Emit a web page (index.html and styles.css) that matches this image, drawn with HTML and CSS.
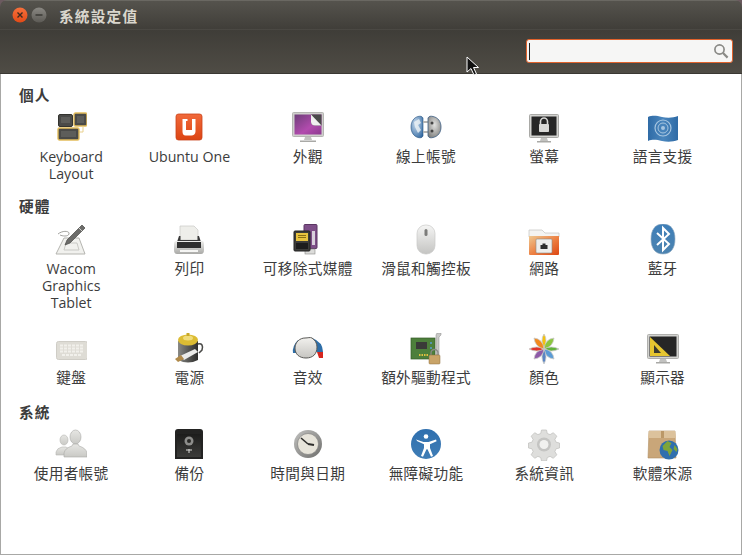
FILE: index.html
```html
<!DOCTYPE html>
<html lang="zh-TW">
<head>
    <meta charset="UTF-8">
    <title>系統設定值</title>
    <link rel="stylesheet" href="styles.css">
</head>
<body>
    <div class="window">
        <!-- Title bar -->
        <div class="title-bar">
            <div class="win-btns">
                <svg class="win-btn" viewBox="0 0 16 16">
                    <defs><linearGradient id="closeGrad" x1="0" y1="0" x2="0" y2="1"><stop offset="0" stop-color="#f6703c"/><stop offset="1" stop-color="#e24a17"/></linearGradient></defs>
                    <circle cx="8" cy="8" r="7.5" fill="url(#closeGrad)"/>
                    <path d="M5.5 5.5l5 5M10.5 5.5l-5 5" stroke="#3c2a20" stroke-width="1.4"/>
                </svg>
                <svg class="win-btn" viewBox="0 0 16 16">
                    <defs><linearGradient id="minGrad" x1="0" y1="0" x2="0" y2="1"><stop offset="0" stop-color="#8a8883"/><stop offset="1" stop-color="#5c5a55"/></linearGradient></defs>
                    <circle cx="8" cy="8" r="7.5" fill="url(#minGrad)"/>
                    <path d="M4.5 8h7" stroke="#3a3935" stroke-width="1.4"/>
                </svg>
            </div>
            <span class="title-text">系統設定值</span>
        </div>

        <!-- Toolbar -->
        <div class="tool-bar">
            <div class="search-box">
                <span class="caret"></span>
                <svg class="search-icon" viewBox="0 0 16 16">
                    <circle cx="6.5" cy="6.5" r="4.6" fill="none" stroke="#8a8a86" stroke-width="1.7"/>
                    <path d="M10 10l4.6 4.6" stroke="#8a8a86" stroke-width="2.2"/>
                </svg>
            </div>
        </div>

        <!-- Main content -->
        <div class="content">
            <h2 class="group-title">個人</h2>
            <div class="icon-grid grid-personal">
                <div class="item">
                    <svg class="icon" viewBox="-2 0 32 32">
                        <rect x="1.5" y="2.5" width="14" height="12" rx="1.5" fill="#4a4a48" stroke="#33332f"/>
                        <rect x="17" y="1" width="13" height="13" rx="1.5" fill="#4a4a48" stroke="#e3bd5c" stroke-width="1.4"/>
                        <path d="M26 14v6h-4" fill="none" stroke="#e8cf8c"/>
                        <rect x="1" y="16" width="21" height="12" rx="1.5" fill="#4a4a48" stroke="#e3bd5c" stroke-width="1.4"/>
                        <rect x="4" y="5" width="9" height="6" fill="#5d5d5a"/>
                        <rect x="20" y="4" width="7" height="7" fill="#5d5d5a"/>
                        <rect x="4" y="19" width="15" height="6" fill="#5d5d5a"/>
                    </svg>
                    <span class="label en">Keyboard Layout</span>
                </div>
                <div class="item">
                    <svg class="icon" viewBox="0 0 32 32">
                        <defs><linearGradient id="oneGrad" x1="0" y1="0" x2="0" y2="1"><stop offset="0" stop-color="#f1693a"/><stop offset="1" stop-color="#dc4513"/></linearGradient></defs>
                        <rect x="3" y="2" width="26" height="26" rx="2.5" fill="url(#oneGrad)" stroke="#c9431a" stroke-width=".8"/>
                        <path d="M9.5 7h5v2h-1.5v9h6v-11h3.5v12.500c0 2.500-2 4-4 4h-6c-2 0-3-1.500-3-4z" fill="#fff"/>
                    </svg>
                    <span class="label en">Ubuntu One</span>
                </div>
                <div class="item">
                    <svg class="icon" viewBox="0 0 32 32">
                        <defs><linearGradient id="purpleGrad" x1="0" y1="0" x2="1" y2="1"><stop offset="0" stop-color="#6d3d79"/><stop offset=".6" stop-color="#b24bae"/><stop offset="1" stop-color="#8c3a90"/></linearGradient></defs>
                        <rect x="0.5" y="0.5" width="31" height="24" rx="1" fill="#cfcfcc" stroke="#b5b5b2"/>
                        <rect x="2.5" y="2.5" width="27" height="20" fill="url(#purpleGrad)"/>
                        <path d="M19 2.5h10.5v11h-6.5q-4 0-4-4z" fill="#4b4b4b"/>
                        <path d="M19 2.5l10.500 11h-6.500q-4 0-4-4z" fill="#f0eff0"/>
                        <path d="M13 25h6l1 3h-8z" fill="#c2c2c0"/>
                        <path d="M8 28.5h16v1.5h-16z" fill="#a9a9a6"/>
                    </svg>
                    <span class="label">外觀</span>
                </div>
                <div class="item">
                    <svg class="icon" viewBox="0 0 32 32">
                        <defs><radialGradient id="globeGrad" cx=".4" cy=".35" r=".8"><stop offset="0" stop-color="#c9dcee"/><stop offset="1" stop-color="#2d659f"/></radialGradient><radialGradient id="plugGrad" cx=".5" cy=".4" r=".8"><stop offset="0" stop-color="#e2e2e0"/><stop offset="1" stop-color="#6a6a68"/></radialGradient></defs>
                        <path d="M13 6c-1-2-3-2-5-1.500-4 1-7 5-7 10.500s3 9.500 7 10.500c2 .5 4 .5 5-1.500z" fill="url(#globeGrad)" stroke="#24507f" stroke-width=".6"/>
                        <path d="M4 10l5-3 2 4-3 2 3 5-3 3-3-6z" fill="#e8eef3" opacity=".85"/>
                        <path d="M13 10h5M13 20h5" stroke="#b5b5b3" stroke-width="2"/>
                        <path d="M18 6c1-2 3-2 5-1.500 5 1 8 5 8 10.500s-3 9.500-8 10.500c-2 .5-4 .5-5-1.500z" fill="url(#plugGrad)" stroke="#3d5f85" stroke-width=".8"/>
                        <circle cx="22" cy="11" r="1.5" fill="#444"/>
                        <circle cx="22" cy="19" r="1.5" fill="#444"/>
                    </svg>
                    <span class="label">線上帳號</span>
                </div>
                <div class="item">
                    <svg class="icon" viewBox="0 -1 32 32">
                        <rect x="1.5" y="1.5" width="29" height="23" rx="1" fill="#d3d3d0" stroke="#a9a9a6"/>
                        <rect x="3.5" y="3.5" width="25" height="19" fill="#262626"/>
                        <path d="M12.5 11v-2.500a3.500 3.500 0 0 1 7 0v2.500" fill="none" stroke="#d8d8d6" stroke-width="1.6"/>
                        <rect x="11" y="11" width="10" height="8" rx=".8" fill="#d8d8d6"/>
                        <path d="M13 25h6l1 3h-8z" fill="#c2c2c0"/>
                        <path d="M9 28h14v1.500h-14z" fill="#a9a9a6"/>
                    </svg>
                    <span class="label">螢幕</span>
                </div>
                <div class="item">
                    <svg class="icon" viewBox="0 0 32 32">
                        <defs><linearGradient id="flagGrad" x1="0" y1="0" x2="1" y2="0"><stop offset="0" stop-color="#2f6ba6"/><stop offset=".5" stop-color="#4a86bd"/><stop offset="1" stop-color="#2f6ba6"/></linearGradient></defs>
                        <path d="M1 5c5-2 9-1 14 0s11 1 16-1v24c-5 2-11 2-16 1s-9-2-14 0z" fill="url(#flagGrad)"/>
                        <circle cx="16" cy="16" r="8" fill="none" stroke="#a6c5e0" stroke-width="1.2"/>
                        <circle cx="16" cy="16" r="5" fill="none" stroke="#a6c5e0"/>
                        <circle cx="16" cy="16" r="2" fill="#a6c5e0"/>
                    </svg>
                    <span class="label">語言支援</span>
                </div>
            </div>

            <h2 class="group-title">硬體</h2>
            <div class="icon-grid grid-hardware">
                <div class="item">
                    <svg class="icon" viewBox="0 0 32 32">
                        <path d="M9 14h15l6 16h-29z" fill="#f1f1ee" stroke="#b5b5b0"/>
                        <path d="M11 19h11l2 7h-15z" fill="none" stroke="#c9c9c5"/>
                        <path d="M3 10c5-4 12-3 11 0s-7 2-9 1" fill="none" stroke="#8c8c88" stroke-width=".8"/>
                        <path d="M27 1l3 3-15 15-5 2 2-5z" fill="#6c6c6a" stroke="#4a4a48" stroke-width=".7"/>
                        <path d="M24 4l3 3" stroke="#cfcfcc"/>
                    </svg>
                    <span class="label en">Wacom Graphics Tablet</span>
                </div>
                <div class="item">
                    <svg class="icon" viewBox="0 0 32 32">
                        <defs><linearGradient id="printGrad" x1="0" y1="0" x2="0" y2="1"><stop offset="0" stop-color="#eeeeec"/><stop offset="1" stop-color="#a9a9a6"/></linearGradient></defs>
                        <path d="M7 2h14l4 4v10h-18z" fill="#eeeeea" stroke="#c9c9c5" stroke-width=".7"/>
                        <path d="M6 12h1.500v4h17v-4h1.500l2 6h-24z" fill="#3a3a3a"/>
                        <path d="M3 17h26q2 0 2 3v6q0 4-3 4h-24q-3 0-3-4v-6q0-3 2-3z" fill="url(#printGrad)"/>
                        <rect x="4" y="18" width="24" height="6" fill="#2e2e2e"/>
                        <rect x="7" y="26" width="18" height="2" fill="#f5f5f3"/>
                    </svg>
                    <span class="label">列印</span>
                </div>
                <div class="item">
                    <svg class="icon" viewBox="-1 0 32 32">
                        <rect x="11" y="0.5" width="13" height="24" rx="1" fill="#7e4f88" stroke="#5b3663"/>
                        <rect x="19" y="7" width="3" height="14" fill="#d9d0dc"/>
                        <rect x="12" y="25" width="10" height="5" fill="#dcdcda" stroke="#8a8a88" stroke-width=".6"/>
                        <rect x="1" y="7" width="16" height="20" rx="1" fill="#3c3c3a" stroke="#232323"/>
                        <rect x="3" y="9" width="12" height="8" fill="#e8c33f"/>
                        <path d="M5 11.500h8M5 13.500h8" stroke="#8a6f14"/>
                        <rect x="3" y="19" width="12" height="6" fill="#1d1d1d"/>
                    </svg>
                    <span class="label">可移除式媒體</span>
                </div>
                <div class="item">
                    <svg class="icon" viewBox="0 0 32 32">
                        <defs><linearGradient id="mouseGrad" x1="0" y1="0" x2="0" y2="1"><stop offset="0" stop-color="#f5f5f4"/><stop offset="1" stop-color="#c4c4c2"/></linearGradient></defs>
                        <rect x="7" y="1" width="18" height="29" rx="8.5" fill="url(#mouseGrad)" stroke="#c9c9c7" stroke-width=".7"/>
                        <rect x="14.5" y="5" width="3" height="7" rx="1.5" fill="#7c7c7a"/>
                    </svg>
                    <span class="label">滑鼠和觸控板</span>
                </div>
                <div class="item">
                    <svg class="icon" viewBox="0 -3 32 32">
                        <defs><linearGradient id="folderGrad" x1="0" y1="0" x2="1" y2="1"><stop offset="0" stop-color="#eec891"/><stop offset=".55" stop-color="#ec7d3f"/><stop offset="1" stop-color="#dd4814"/></linearGradient></defs>
                        <path d="M1 8v-5h13l3 3h14v4h-30z" fill="#f4f4f2" stroke="#c9c9c7" stroke-width=".8"/>
                        <path d="M1 9h30v18q0 1-1 1h-28q-1 0-1-1z" fill="url(#folderGrad)"/>
                        <rect x="8" y="12" width="16" height="14" rx="1" fill="#eeeeec" stroke="#8a8a88" stroke-width=".6"/>
                        <path d="M12.5 22v-4h2v-1.500h3v1.500h2v4z" fill="#2e2e2e"/>
                    </svg>
                    <span class="label">網路</span>
                </div>
                <div class="item">
                    <svg class="icon" viewBox="0 0 32 32">
                        <defs><linearGradient id="btGrad" x1="0" y1="0" x2="0" y2="1"><stop offset="0" stop-color="#3f7fb8"/><stop offset="1" stop-color="#4c83b0"/></linearGradient></defs>
                        <path d="M16 0c8 0 12 6 12 15s-4 15-12 15-12-6-12-15 4-15 12-15z" fill="url(#btGrad)" stroke="#8fa9c0" stroke-width=".6"/>
                        <path d="M10 9l12 11-6 6v-22l6 6-12 11" fill="none" stroke="#fff" stroke-width="2"/>
                    </svg>
                    <span class="label">藍牙</span>
                </div>
                <div class="item">
                    <svg class="icon" viewBox="-1 0 32 32">
                        <rect x="0.5" y="8.5" width="31" height="18" rx="2" fill="#dedcd5" stroke="#cfcdc6"/>
                        <path d="M4 12.500h24M4 15.500h24M4 18.500h24M6 22h20" stroke="#f1f0eb" stroke-width="2" stroke-dasharray="3 1"/>
                    </svg>
                    <span class="label">鍵盤</span>
                </div>
                <div class="item">
                    <svg class="icon" viewBox="0 0 32 32">
                        <defs><linearGradient id="battGrad" x1="0" y1="0" x2="1" y2="0"><stop offset="0" stop-color="#8a8a86"/><stop offset=".5" stop-color="#5a5a57"/><stop offset="1" stop-color="#2e2e2c"/></linearGradient></defs>
                        <path d="M5 8h20v19q-10 5-20 0z" fill="url(#battGrad)"/>
                        <ellipse cx="15" cy="7" rx="10" ry="5.5" fill="#dcbc33"/>
                        <ellipse cx="15" cy="5" rx="5" ry="2.5" fill="#f0dc7a"/>
                        <rect x="13.5" y="0" width="3" height="3" fill="#c9a928"/>
                        <path d="M25 11q6-1 4 6l-3 3" fill="none" stroke="#4a4a48" stroke-width="1.5"/>
                        <path d="M7 23l15-7 3 3-14 8z" fill="#ebebe9"/>
                        <path d="M2 26l6-4 3 4-6 3z" fill="#b08a4a"/>
                    </svg>
                    <span class="label">電源</span>
                </div>
                <div class="item">
                    <svg class="icon" viewBox="0 0 32 32">
                        <defs><linearGradient id="knobGrad" x1="0" y1="0" x2="0" y2="1"><stop offset="0" stop-color="#f2f1ee"/><stop offset="1" stop-color="#c6c5c1"/></linearGradient></defs>
                        <path d="M6 7Q0 13 1 20L5 20z" fill="#2e6ea8"/>
                        <path d="M20 5Q31 9 31 19L24 19z" fill="#2e6ea8"/>
                        <path d="M25 19l6 0 0 6-4 0z" fill="#d6261e"/>
                        <path d="M3 15c0-6 5-10 10-10 3 0 5-1 7 0 3 2 5 5 5 9 0 7-4 11-11 11s-11-4-11-10z" fill="url(#knobGrad)" stroke="#5a5a57"/>
                    </svg>
                    <span class="label">音效</span>
                </div>
                <div class="item">
                    <svg class="icon" viewBox="0 0 32 32">
                        <rect x="1" y="5" width="24" height="21" fill="#4d7f3b" stroke="#365c2a" stroke-width=".7"/>
                        <rect x="6" y="9" width="11" height="7" fill="#3a3a38"/>
                        <path d="M9 22h10" stroke="#e0c040" stroke-width="2" stroke-dasharray="1.5 1"/>
                        <path d="M21 9v2M21 14v2" stroke="#5a9ad8" stroke-width="1.5"/>
                        <path d="M27 0h4v2l-2 2v18h-3v-20z" fill="#c9c9c7" stroke="#8a8a88" stroke-width=".5"/>
                        <path d="M21 22v-2a3.500 3.500 0 0 1 7 0v2" fill="none" stroke="#8a8a88" stroke-width="1.3"/>
                        <rect x="19" y="22" width="11" height="9" rx="1" fill="#c9a468" stroke="#8d6f3c" stroke-width=".5"/>
                    </svg>
                    <span class="label">額外驅動程式</span>
                </div>
                <div class="item">
                    <svg class="icon" viewBox="0 0 32 32">
                        <path d="M16 16Q12 7 16 1Q20 7 16 16Z" fill="#f4c20d" stroke="#c9c9c7" stroke-width=".8"/>
                        <path d="M16 16Q17 6 26 5Q25 14 16 16Z" fill="#8cc63f" stroke="#c9c9c7" stroke-width=".8"/>
                        <path d="M16 16Q23 12 31 16Q23 20 16 16Z" fill="#62b33b" stroke="#c9c9c7" stroke-width=".8"/>
                        <path d="M16 16Q25 17 26 26Q17 25 16 16Z" fill="#5b9bd5" stroke="#c9c9c7" stroke-width=".8"/>
                        <path d="M16 16Q20 24 16 31Q12 24 16 16Z" fill="#5a85c4" stroke="#c9c9c7" stroke-width=".8"/>
                        <path d="M16 16Q15 25 6 26Q7 17 16 16Z" fill="#8e5aa8" stroke="#c9c9c7" stroke-width=".8"/>
                        <path d="M16 16Q9 20 1 16Q9 12 16 16Z" fill="#e0342c" stroke="#c9c9c7" stroke-width=".8"/>
                        <path d="M16 16Q7 14 6 5Q15 6 16 16Z" fill="#f28a1e" stroke="#c9c9c7" stroke-width=".8"/>
                    </svg>
                    <span class="label">顏色</span>
                </div>
                <div class="item">
                    <svg class="icon" viewBox="0 -1 32 32">
                        <rect x="0.5" y="0.5" width="31" height="24" rx="1" fill="#d3d3d0" stroke="#b0b0ad"/>
                        <rect x="2.5" y="2.5" width="27" height="20" fill="#262626"/>
                        <path d="M3 3l20 19h-20z" fill="#e5c530"/>
                        <path d="M7 11l7 8h-7z" fill="#3a3a30"/>
                        <path d="M13 25h6l1 3h-8z" fill="#c2c2c0"/>
                        <path d="M9 28h14v1.500h-14z" fill="#a9a9a6"/>
                    </svg>
                    <span class="label">顯示器</span>
                </div>
            </div>

            <h2 class="group-title">系統</h2>
            <div class="icon-grid">
                <div class="item">
                    <svg class="icon" viewBox="-1 0 32 32">
                        <defs><linearGradient id="userGrad" x1="0" y1="0" x2="0" y2="1"><stop offset="0" stop-color="#e6e6e3"/><stop offset="1" stop-color="#c9c9c5"/></linearGradient></defs>
                        <ellipse cx="8" cy="11" rx="4" ry="5" fill="url(#userGrad)" stroke="#b5b5b2" stroke-width=".6"/>
                        <path d="M0 26v-3q1-4 6-5h4q3 1 4 4v4z" fill="url(#userGrad)" stroke="#b5b5b2" stroke-width=".6"/>
                        <ellipse cx="19.5" cy="8" rx="5.5" ry="7" fill="url(#userGrad)" stroke="#a9a9a6" stroke-width=".6"/>
                        <path d="M8 28v-4q1-5 8-7l1-2h5l1 2q7 2 8 7v4z" fill="url(#userGrad)" stroke="#a9a9a6" stroke-width=".6"/>
                    </svg>
                    <span class="label">使用者帳號</span>
                </div>
                <div class="item">
                    <svg class="icon" viewBox="0 0 32 32">
                        <defs><linearGradient id="safeGrad" x1="0" y1="0" x2="0" y2="1"><stop offset="0" stop-color="#1d1d1c"/><stop offset="1" stop-color="#3c3c3a"/></linearGradient></defs>
                        <path d="M5 0h22q3 0 3 3v27h-28v-27q0-3 3-3z" fill="#232322"/>
                        <rect x="4" y="5" width="24" height="23" fill="url(#safeGrad)"/>
                        <circle cx="16" cy="12" r="4.5" fill="#8d8d8b"/>
                        <circle cx="16" cy="12" r="2" fill="#2a2a28"/>
                        <path d="M16 20v4M13 21h6" stroke="#dcdcda"/>
                    </svg>
                    <span class="label">備份</span>
                </div>
                <div class="item">
                    <svg class="icon" viewBox="0 0 32 32">
                        <defs><linearGradient id="clockGrad" x1="0" y1="0" x2="1" y2="1"><stop offset="0" stop-color="#c2c2c0"/><stop offset="1" stop-color="#6e6e6c"/></linearGradient></defs>
                        <circle cx="16" cy="15" r="14" fill="url(#clockGrad)"/>
                        <circle cx="16" cy="15" r="10.5" fill="#e7e4da" stroke="#7a7a78" stroke-width=".6"/>
                        <path d="M16 15l-7-6" stroke="#2e2e2c" stroke-width="1.6"/>
                        <path d="M16 15l6 1" stroke="#2e2e2c" stroke-width="2"/>
                    </svg>
                    <span class="label">時間與日期</span>
                </div>
                <div class="item">
                    <svg class="icon" viewBox="0 0 32 32">
                        <defs><linearGradient id="a11yGrad" x1="0" y1="0" x2="0" y2="1"><stop offset="0" stop-color="#2f6fae"/><stop offset="1" stop-color="#3f7db6"/></linearGradient></defs>
                        <circle cx="16" cy="15" r="15" fill="url(#a11yGrad)"/>
                        <circle cx="16" cy="7.5" r="2.3" fill="#fff"/>
                        <path d="M6 10.500l7.500 2.500h5l7.500-2.500.6 1.800-6.600 3v3.700l3 8-2 .7-3.500-7.500h-1l-3.500 7.500-2-.7 3-8v-3.700l-6.600-3z" fill="#fff"/>
                    </svg>
                    <span class="label">無障礙功能</span>
                </div>
                <div class="item">
                    <svg class="icon" viewBox="0 0 32 32">
                        <path d="M13.5 1h5l.8 3.500 2.800 1.100 3.200-1.900 3.500 3.500-1.900 3.200 1.100 2.800 3.500.8v5l-3.500.8-1.100 2.800 1.900 3.200-3.500 3.500-3.200-1.900-2.800 1.100-.8 3.500h-5l-.8-3.500-2.800-1.100-3.200 1.900-3.500-3.500 1.900-3.200-1.100-2.800-3.500-.8v-5l3.500-.8 1.100-2.800-1.900-3.200 3.500-3.500 3.200 1.900 2.800-1.100z" fill="#dededc" stroke="#bdbdba" stroke-width=".7"/>
                        <circle cx="16" cy="15.5" r="7" fill="#c4c4c2"/>
                        <circle cx="16" cy="15.5" r="4.5" fill="#f1f1ef"/>
                    </svg>
                    <span class="label">系統資訊</span>
                </div>
                <div class="item">
                    <svg class="icon" viewBox="0 0 32 32">
                        <path d="M2 2h26l1 27h-28z" fill="#c9a679" stroke="#b08f63" stroke-width=".6"/>
                        <path d="M2 2h26l1 7h-28z" fill="#dcc29c"/>
                        <path d="M14 2h3v7h-3z" fill="#bb9868"/>
                        <circle cx="22" cy="21" r="9.5" fill="#2f6fae"/>
                        <path d="M15.5 17l5-5 4 2-2 4 3 3-3 6-2-5-4-1zM27.500 16l3 4-1 3-3-3z" fill="#7ea53a"/>
                    </svg>
                    <span class="label">軟體來源</span>
                </div>
            </div>
        </div>
    </div>

    <!-- Mouse pointer from the capture -->
    <svg class="pointer" viewBox="0 0 14 20">
        <path d="M1 1v15l4-3.500 3 6.500 2.500-1-3-6.500h5z" fill="#111" stroke="#fff"/>
    </svg>
</body>
</html>
```

FILE: styles.css
```css
* {
    margin: 0;
    padding: 0;
    box-sizing: border-box;
}

body {
    font-family: "Open Sans", "Noto Sans CJK TC", sans-serif;
    background-color: #6b5a5f;
    width: 742px;
    height: 555px;
    overflow: hidden;
}

.window {
    height: 555px;
    display: flex;
    flex-direction: column;
    border-radius: 7px 7px 0 0;
    overflow: hidden;
}

/* Title bar */
.title-bar {
    height: 30px;
    display: flex;
    align-items: center;
    padding-left: 12px;
    background: linear-gradient(180deg, #55534d, #403e39);
    border-top: 1px solid #6a6862;
    border-bottom: 1px solid #4a4843;
}

.win-btns {
    display: flex;
    gap: 3px;
}

.win-btn {
    width: 16px;
    height: 16px;
}

.title-text {
    margin-left: 12px;
    font-size: 14.67px;
    font-weight: bold;
    letter-spacing: 1.2px;
    color: #d9d6cd;
}

/* Toolbar */
.tool-bar {
    height: 44px;
    display: flex;
    justify-content: flex-end;
    align-items: center;
    padding: 0 9px 1px 0;
    background: linear-gradient(180deg, #3f3d38, #4f4c45);
    border-bottom: 1px solid #3a3833;
}

.search-box {
    width: 207px;
    height: 24px;
    display: flex;
    align-items: center;
    justify-content: space-between;
    padding: 0 3px 0 2px;
    background-color: #f6f6f5;
    border: 1px solid #e0622c;
    border-radius: 3px;
}

.caret {
    width: 1px;
    height: 17px;
    background-color: #222;
}

.search-icon {
    width: 16px;
    height: 16px;
}

/* Content */
.content {
    flex: 1;
    padding: 13px 11px 0;
    background-color: #fff;
    border-left: 1px solid #a8a8a6;
    border-right: 1px solid #a8a8a6;
    border-bottom: 1px solid #a8a8a6;
}

.group-title {
    padding-left: 7px;
    font-size: 14.67px;
    line-height: 17px;
    font-weight: bold;
    letter-spacing: 1px;
    color: #3c3c3c;
}

.icon-grid {
    display: grid;
    grid-template-columns: repeat(6, 118.3px);
    margin-top: 8px;
}

.grid-personal {
    margin-bottom: 16px;
}

.grid-hardware {
    margin-top: 9px;
    margin-bottom: 18px;
    row-gap: 22px;
}

.item {
    display: flex;
    flex-direction: column;
    align-items: center;
    gap: 4px;
}

.icon {
    width: 32px;
    height: 32px;
    flex-shrink: 0;
}

.label {
    width: 100px;
    font-size: 14.67px;
    line-height: 17px;
    letter-spacing: .3px;
    text-align: center;
    color: #3c3c3c;
}

.label.en {
    font-size: 14.2px;
    letter-spacing: 0;
}

/* Pointer */
.pointer {
    position: absolute;
    left: 466px;
    top: 56px;
    width: 14px;
    height: 20px;
}
```
